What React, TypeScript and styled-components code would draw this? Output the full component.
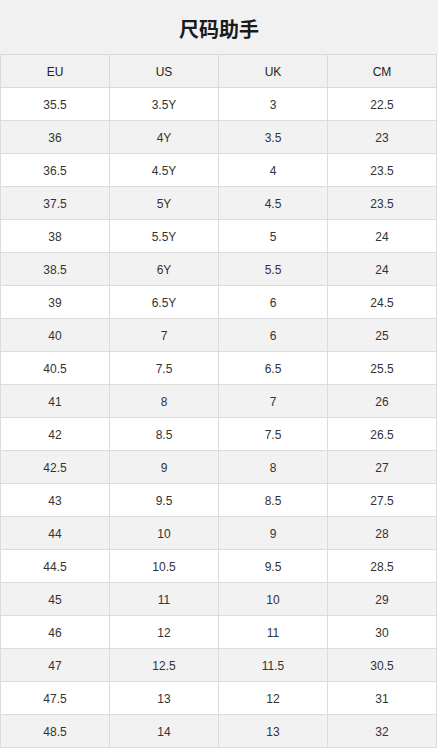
import React from "react";
import styled, { createGlobalStyle } from "styled-components";

const GlobalStyle = createGlobalStyle`
  html, body {
    margin: 0;
    padding: 0;
    background: #ffffff;
  }
  body {
    font-family: "Liberation Sans", Arial, "Noto Sans CJK SC", sans-serif;
  }
`;

const Page = styled.div`
  width: 438px;
  display: flex;
  flex-direction: column;
`;

const Title = styled.h1`
  margin: 0;
  height: 54px;
  padding-top: 2px;
  box-sizing: border-box;
  display: flex;
  align-items: center;
  justify-content: center;
  background: #f1f1f1;
  font-family: "Noto Sans CJK SC", sans-serif;
  font-size: 20px;
  font-weight: 700;
  color: #1a1a1a;
  letter-spacing: 0;
`;

const Table = styled.table`
  width: 437px;
  border-collapse: collapse;
  table-layout: fixed;
`;

const HeadCell = styled.th`
  height: 31px;
  padding: 1px 0 0;
  border: 1px solid #d9d9d9;
  background: #f1f1f1;
  font-weight: 400;
  font-size: 12px;
  color: #222;
  text-align: center;
`;

const Row = styled.tr<{ $alt: boolean }>`
  background: ${(p) => (p.$alt ? "#f2f2f2" : "#ffffff")};
`;

const Cell = styled.td`
  height: 31px;
  padding: 1px 0 0;
  border: 1px solid #dcdcdc;
  font-size: 12px;
  color: #333;
  text-align: center;
`;

const headers = ["EU", "US", "UK", "CM"];

const rows: string[][] = [
  ["35.5", "3.5Y", "3", "22.5"],
  ["36", "4Y", "3.5", "23"],
  ["36.5", "4.5Y", "4", "23.5"],
  ["37.5", "5Y", "4.5", "23.5"],
  ["38", "5.5Y", "5", "24"],
  ["38.5", "6Y", "5.5", "24"],
  ["39", "6.5Y", "6", "24.5"],
  ["40", "7", "6", "25"],
  ["40.5", "7.5", "6.5", "25.5"],
  ["41", "8", "7", "26"],
  ["42", "8.5", "7.5", "26.5"],
  ["42.5", "9", "8", "27"],
  ["43", "9.5", "8.5", "27.5"],
  ["44", "10", "9", "28"],
  ["44.5", "10.5", "9.5", "28.5"],
  ["45", "11", "10", "29"],
  ["46", "12", "11", "30"],
  ["47", "12.5", "11.5", "30.5"],
  ["47.5", "13", "12", "31"],
  ["48.5", "14", "13", "32"],
];

export default function App() {
  return (
    <Page>
      <GlobalStyle />
      <Title>尺码助手</Title>
      <Table>
        <thead>
          <tr>
            {headers.map((h) => (
              <HeadCell key={h}>{h}</HeadCell>
            ))}
          </tr>
        </thead>
        <tbody>
          {rows.map((r, i) => (
            <Row key={i} $alt={i % 2 === 1}>
              {r.map((c, j) => (
                <Cell key={j}>{c}</Cell>
              ))}
            </Row>
          ))}
        </tbody>
      </Table>
    </Page>
  );
}
